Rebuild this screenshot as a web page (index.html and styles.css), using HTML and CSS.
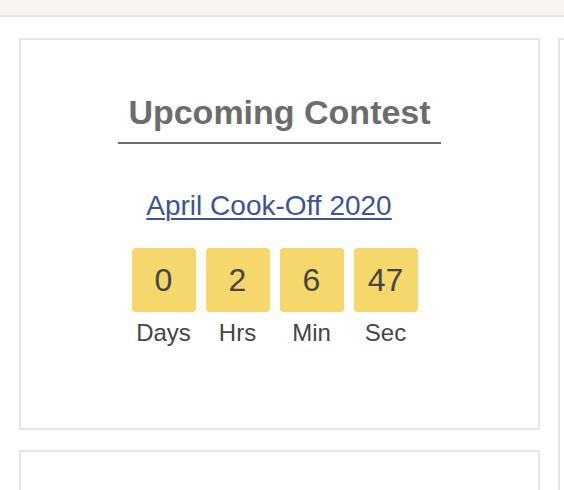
FILE: index.html
```html
<!DOCTYPE html>
<html>
<head>
<meta charset="utf-8">
<link rel="stylesheet" href="styles.css">
</head>
<body>
<div class="topbar"></div>
<div class="main">
  <div class="column">
    <div class="card contest">
      <h2 class="title">Upcoming Contest</h2>
      <a class="contest-link" href="#">April Cook-Off 2020</a>
      <div class="countdown">
        <div class="unit"><div class="box">0</div><div class="label">Days</div></div>
        <div class="unit"><div class="box">2</div><div class="label">Hrs</div></div>
        <div class="unit"><div class="box">6</div><div class="label">Min</div></div>
        <div class="unit"><div class="box">47</div><div class="label">Sec</div></div>
      </div>
    </div>
    <div class="card next"></div>
  </div>
  <div class="card side"></div>
</div>
</body>
</html>
```
FILE: styles.css
```css
html, body {
  margin: 0;
  padding: 0;
  background: #ffffff;
  font-family: "Liberation Sans", Arial, sans-serif;
  overflow: hidden;
}
.topbar {
  height: 15px;
  background: #f8f5ee;
  border-bottom: 2px solid #e6e6e6;
}
.main {
  display: flex;
  gap: 18px;
  padding: 21px 0 0 19px;
}
.column {
  display: flex;
  flex-direction: column;
  gap: 20px;
  width: 521px;
  flex: none;
}
.card {
  border: 2px solid #e6e6e6;
  box-sizing: border-box;
  background: #fff;
}
.contest {
  height: 392px;
  display: flex;
  flex-direction: column;
  align-items: center;
}
.next {
  height: 120px;
}
.side {
  width: 300px;
  height: 600px;
  flex: none;
}
.title {
  margin: 52px 0 0;
  padding: 0 10px 10px;
  font-size: 34px;
  line-height: 40px;
  font-weight: bold;
  color: #6c6c6c;
  border-bottom: 2px solid #6c6c6c;
}
.contest-link {
  margin: 46px 21px 0 0;
  font-size: 28px;
  line-height: 32px;
  color: #3a5497;
  text-decoration: underline;
  text-underline-offset: 3px;
  text-decoration-thickness: 2px;
}
.countdown {
  display: flex;
  gap: 10px;
  margin: 26px 10px 0 0;
}
.unit {
  display: flex;
  flex-direction: column;
  align-items: center;
  width: 64px;
  gap: 7px;
}
.box {
  width: 64px;
  height: 64px;
  border-radius: 4px;
  background: #f6d76b;
  color: #454545;
  font-size: 32px;
  line-height: 64px;
  text-align: center;
}
.label {
  font-size: 24px;
  line-height: 28px;
  color: #454545;
  white-space: nowrap;
}
```
